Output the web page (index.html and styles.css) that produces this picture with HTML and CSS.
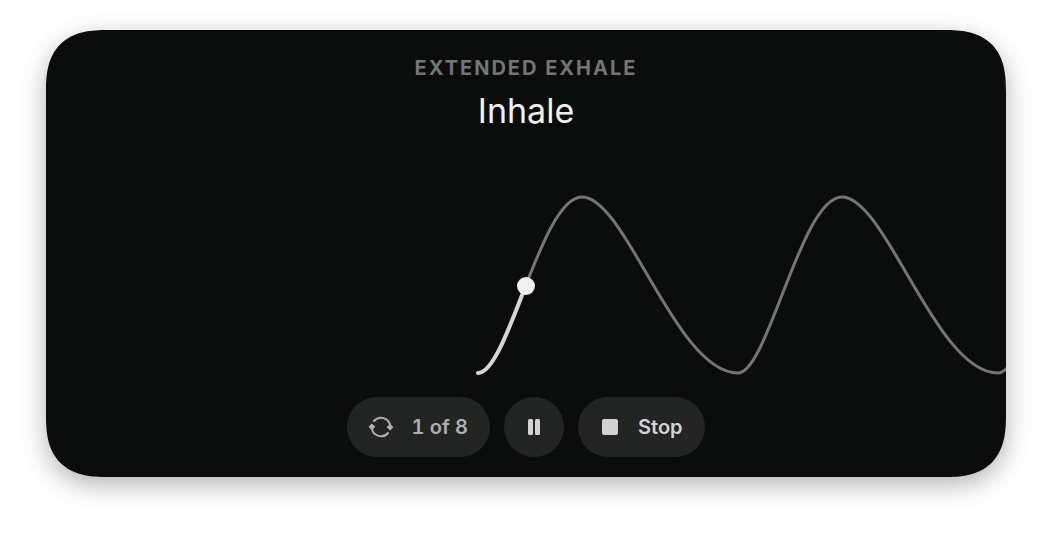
FILE: index.html
```html
<!DOCTYPE html>
<html lang="en">
<head>
<meta charset="utf-8">
<meta name="viewport" content="width=device-width, initial-scale=1">
<title>Extended Exhale</title>
<link rel="stylesheet" href="styles.css">
</head>
<body>
<main class="card">
  <header class="heading">
    <p class="exercise">Extended Exhale</p>
    <h1 class="phase">Inhale</h1>
  </header>
  <svg class="wave" viewBox="0 0 960 190" role="img" aria-label="Breathing curve">
    <path class="wave-ahead" d="M432 183C462 183 495 7 536 7C580 7 630 183 692 183C722 183 755 7 796 7C840 7 890 183 952 183C982 183 1015 7 1056 7"/>
    <path class="wave-done" d="M432 183C447 183 463 139 480 95"/>
    <circle class="wave-dot" cx="480" cy="96" r="9"/>
  </svg>
  <div class="controls">
    <button class="control cycles" type="button">
      <svg class="icon" viewBox="0 0 24 24" aria-hidden="true">
        <path class="arc" d="M5 6A9.2 9.2 0 0 1 21.2 12M19 18A9.2 9.2 0 0 1 2.8 12"/>
        <path class="solid" d="M21.2 8.800L24.400 12.200L21.200 15.400L17.600 12.200zM2.800 8.600L6.400 11.800L2.800 15.200L-.4 11.800z"/>
      </svg>
      <span>1 of 8</span>
    </button>
    <button class="control pause" type="button" aria-label="Pause">
      <svg class="icon" viewBox="0 0 24 24" aria-hidden="true">
        <rect class="solid" x="6" y="4" width="5" height="16" rx="1.500"/>
        <rect class="solid" x="13" y="4" width="5" height="16" rx="1.500"/>
      </svg>
    </button>
    <button class="control stop" type="button">
      <svg class="icon" viewBox="0 0 24 24" aria-hidden="true">
        <rect class="solid" x="4" y="4" width="16" height="16" rx="2"/>
      </svg>
      <span>Stop</span>
    </button>
  </div>
</main>
</body>
</html>
```
FILE: styles.css
```css
* {
  box-sizing: border-box;
}

body {
  margin: 0;
  padding: 30px 46px 62px;
  background: #fff;
  font-family: Inter, "Liberation Sans", sans-serif;
}

.card {
  display: flex;
  flex-direction: column;
  padding: 26px 0 20px;
  overflow: hidden;
  border-radius: 46px;
  background: #0b0d0c;
  box-shadow: 0 8px 26px rgba(0, 0, 0, 0.3);
}

@supports (corner-shape: superellipse(1.4)) {
  .card {
    border-radius: 62px;
    corner-shape: superellipse(1.4);
  }
}

.heading {
  text-align: center;
}

.exercise {
  margin: 0;
  color: #747675;
  font-size: 20px;
  font-weight: 700;
  line-height: 24px;
  letter-spacing: 2px;
  text-transform: uppercase;
}

.phase {
  margin: 8px 0 0;
  color: #f0f0f0;
  font-size: 34px;
  font-weight: 400;
  line-height: 46px;
}

.wave {
  display: block;
  width: 100%;
  margin-top: 56px;
  fill: none;
  stroke-width: 3;
  stroke-linecap: round;
}

.wave-ahead {
  stroke: #747675;
}

.wave-done {
  stroke: #d4d5d4;
  stroke-width: 4;
}

.wave-dot {
  fill: #f0f0f0;
}

.controls {
  display: flex;
  justify-content: center;
  gap: 14px;
  margin-top: 17px;
}

.control {
  display: flex;
  align-items: center;
  gap: 18px;
  height: 60px;
  padding: 0 22px;
  border: 0;
  border-radius: 30px;
  background: #232524;
  color: #d2d3d2;
  font: inherit;
  font-size: 20px;
  font-weight: 600;
  cursor: pointer;
}

.cycles {
  color: #afb0af;
  font-variant-numeric: tabular-nums;
}

.pause {
  justify-content: center;
  width: 60px;
  padding: 0;
}

.stop {
  gap: 16px;
  padding-left: 20px;
}

.icon {
  flex: none;
  width: 24px;
  height: 24px;
  overflow: visible;
}

.arc {
  fill: none;
  stroke: currentColor;
  stroke-width: 2;
  stroke-linecap: round;
}

.solid {
  fill: currentColor;
}
```
